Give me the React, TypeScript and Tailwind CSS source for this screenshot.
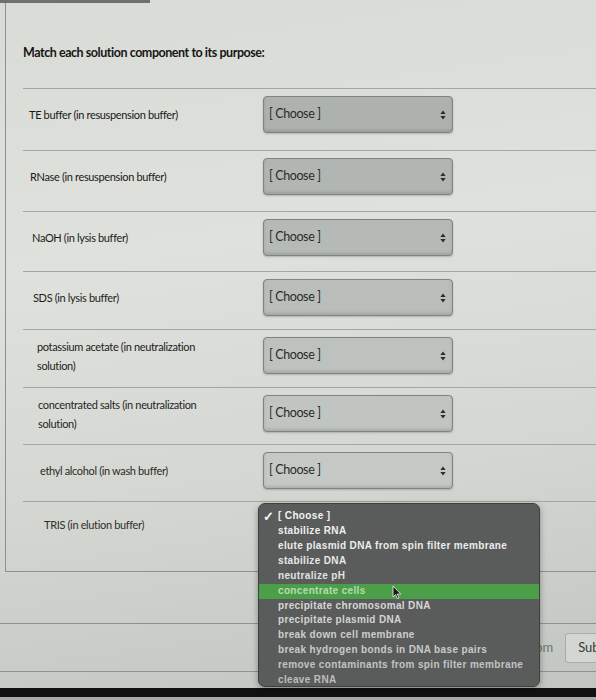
import React from 'react';

type Row = { label: string; tone: string; text: string; h: string; pl: string };

const rows: Row[] = [
    { label: 'TE buffer (in resuspension buffer)', tone: 'bg-[#adb2ae]', text: 'text-[#171717]', h: 'h-[62px]', pl: 'pl-[6px]' },
    { label: 'RNase (in resuspension buffer)', tone: 'bg-[#b1b6b2]', text: 'text-[#191919]', h: 'h-[61px]', pl: 'pl-[7px]' },
    { label: 'NaOH (in lysis buffer)', tone: 'bg-[#b5bab6]', text: 'text-[#1b1b1b]', h: 'h-[60px]', pl: 'pl-[9px]' },
    { label: 'SDS (in lysis buffer)', tone: 'bg-[#b9beba]', text: 'text-[#1d1d1d]', h: 'h-[58px]', pl: 'pl-[10px]' },
    { label: 'potassium acetate (in neutralization solution)', tone: 'bg-[#bdc2be]', text: 'text-[#212121]', h: 'h-[58px]', pl: 'pl-[14px]' },
    { label: 'concentrated salts (in neutralization solution)', tone: 'bg-[#c1c5c1]', text: 'text-[#252525]', h: 'h-[57px]', pl: 'pl-[15px]' },
    { label: 'ethyl alcohol (in wash buffer)', tone: 'bg-[#c5c9c5]', text: 'text-[#292929]', h: 'h-[57px]', pl: 'pl-[17px]' },
];

const options = [
    { text: 'stabilize RNA', color: 'text-[#efefef]' },
    { text: 'elute plasmid DNA from spin filter membrane', color: 'text-[#ececec]' },
    { text: 'stabilize DNA', color: 'text-[#e8e8e8]' },
    { text: 'neutralize pH', color: 'text-[#e2e2e2]' },
    { text: 'concentrate cells', color: 'text-[#b8dab3]', active: true },
    { text: 'precipitate chromosomal DNA', color: 'text-[#d6d7d6]' },
    { text: 'precipitate plasmid DNA', color: 'text-[#d2d3d2]' },
    { text: 'break down cell membrane', color: 'text-[#cdcecd]' },
    { text: 'break hydrogen bonds in DNA base pairs', color: 'text-[#c8cac8]' },
    { text: 'remove contaminants from spin filter membrane', color: 'text-[#c2c4c2]' },
    { text: 'cleave RNA', color: 'text-[#bcbebc]' },
];

// small up/down caret pair on the right of each select
const Carets = () => (
    <svg width="6" height="10" viewBox="0 0 6 10" className="shrink-0">
        <path d="M3 0.5 L5.6 4 L0.4 4 Z" fill="#2b2b2b" />
        <path d="M3 9.5 L5.6 6 L0.4 6 Z" fill="#2b2b2b" />
    </svg>
);

const Select = ({ tone }: { tone: string }) => (
    <div className={`w-[190px] h-[37px] ${tone} border border-[#80857f] rounded-[4px] shadow-[inset_0_-2px_3px_rgba(0,0,0,0.12),0_1px_2px_rgba(0,0,0,0.2)] flex items-center justify-between pl-[5px] pr-[6px]`}>
        <span className="text-[12.5px] tracking-[-0.4px] text-[#2a2a2a]">[ Choose ]</span>
        <Carets />
    </div>
);

const Pointer = () => (
    <svg width="10" height="15" viewBox="0 0 10 15" className="absolute left-[392px] top-[585px]">
        <path d="M1 1 L1 12 L3.6 9.6 L5.4 13.6 L7 12.9 L5.3 9 L8.8 9 Z" fill="#1a1a1a" stroke="#f2f2f2" strokeWidth="0.8" />
    </svg>
);

const App: React.FC = () => {
    return (
        <div className="relative w-[596px] h-[700px] overflow-hidden font-[Lato,sans-serif] bg-[linear-gradient(172deg,#d9dbd6_0%,#dfe1dc_35%,#d5d8d2_65%,#c1c5bf_100%)]">
            {/* tab edge along the top */}
            <div className="h-[3px] w-[150px] bg-[#6f716e]" />

            {/* question box */}
            <div className="ml-[5px] h-[569px] border-l border-b border-[#8e928d] pl-[17px]">
                <h2 className="pt-[41px] h-[85px] text-[12.5px] font-bold text-[#161616] tracking-[-0.45px]">
                    Match each solution component to its purpose:
                </h2>

                {rows.map((row, i) => (
                    <div key={i} className={`${row.h} border-t border-[#a3a7a2] pt-[7px]`}>
                        <div className="h-[37px] flex items-center">
                            <div className={`w-[240px] ${row.pl} pr-[50px] text-[11px] leading-[19px] tracking-[-0.35px] ${row.text}`}>
                                {row.label}
                            </div>
                            <Select tone={row.tone} />
                        </div>
                    </div>
                ))}

                <div className="h-[71px] border-t border-[#a3a7a2] pt-[5px]">
                    <div className="h-[37px] flex items-center pl-[21px] text-[11px] tracking-[-0.35px] text-[#2e2e2e]">
                        TRIS (in elution buffer)
                    </div>
                </div>
            </div>

            {/* quiz footer */}
            <div className="mt-[51px] h-[49px] border-t border-b border-[#8f938e] flex items-center justify-end">
                <span className="text-[13px] text-[#727470]">Quiz saved at 10:41pm</span>
                <button className="shrink-0 ml-[12px] -mr-[65px] h-[30px] px-[12px] border border-[#a9ada8] rounded-[3px] bg-[#d3d6d1] text-[13px] text-[#3a3a3a]">
                    Submit Quiz
                </button>
            </div>
            <div className="mt-[16px] h-[9px] bg-[#111111]" />
            <div className="h-[10px] bg-[#a7aaa6]" />

            {/* open select menu for the TRIS row */}
            <div className="absolute left-[258px] top-[503px] w-[282px] h-[184px] rounded-[7px] bg-[#5a5c5b] border border-[#3e403f] shadow-[0_2px_6px_rgba(0,0,0,0.35)] pt-[4px] font-['Liberation_Sans',Arial,sans-serif] font-bold text-[10px] leading-[14.9px] tracking-[0.35px]">
                <div className="flex items-center h-[16px] text-[#f2f2f2]">
                    <span className="w-[19px] pl-[4px] text-[13px] leading-none">✓</span>
                    <span>[ Choose ]</span>
                </div>
                {options.map((o, i) => (
                    <div key={i} className={`pl-[19px] ${o.color} ${o.active ? 'bg-[#4b9f49]' : ''}`}>
                        {o.text}
                    </div>
                ))}
            </div>
            <Pointer />
        </div>
    );
};

export default App;
